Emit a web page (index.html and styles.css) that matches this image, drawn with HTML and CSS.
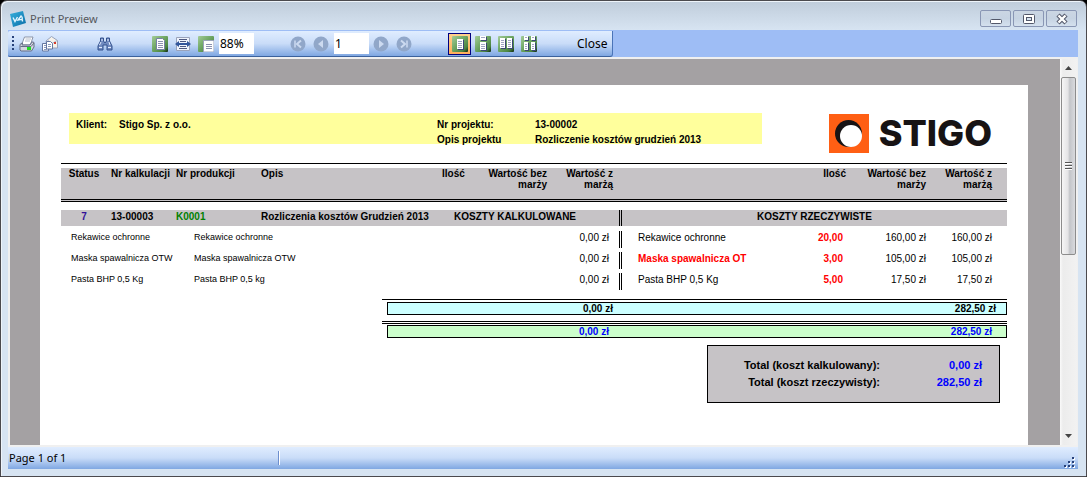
FILE: index.html
```html
<!DOCTYPE html>
<html lang="pl">
<head>
<meta charset="utf-8">
<title>Print Preview</title>
<link rel="stylesheet" href="styles.css">
</head>
<body>
<svg class="defs" aria-hidden="true">
  <defs>
    <linearGradient id="green" x1="0" y1="0" x2="1" y2="1"><stop offset="0" stop-color="#a3cb98"/><stop offset=".4" stop-color="#74ab69"/><stop offset=".8" stop-color="#4a8441"/><stop offset="1" stop-color="#0d260d"/></linearGradient>
    <linearGradient id="tile" x1="0" y1="0" x2="1" y2="1"><stop offset="0" stop-color="#36b0dd"/><stop offset="1" stop-color="#0a6ea8"/></linearGradient>
  </defs>
</svg>
<div class="window">
  <header class="titlebar">
    <svg class="app-icon" viewBox="0 0 16 16"><path d="M0 3 13 0 16 12 3 16Z" fill="url(#tile)"/><path d="M3 6.500l2 4 2.500-4.500M11.500 4.500l-3.500 4.500 5-1M12 5.500l.5 5" fill="none" stroke="#e4f5ff" stroke-width="1.400"/></svg>
    <h1 class="title">Print Preview</h1>
    <div class="window-buttons">
      <button class="window-button" aria-label="Minimize"><svg viewBox="0 0 14 12"><rect x="1.500" y="6.500" width="11" height="4" rx="1" fill="#fff" stroke="#53586a"/></svg></button>
      <button class="window-button" aria-label="Maximize"><svg viewBox="0 0 14 12"><rect x="1.500" y="1.500" width="11" height="9" rx="1" fill="#fff" stroke="#53586a"/><rect x="4.500" y="4.500" width="5" height="3" fill="#d7e4f2" stroke="#53586a"/></svg></button>
      <button class="window-button" aria-label="Close window"><svg viewBox="0 0 14 12"><path d="M3 2l8 8M11 2l-8 8" stroke="#53586a" stroke-width="4.500"/><path d="M3.500 2.500l7 7M10.500 2.500l-7 7" stroke="#fff" stroke-width="2.400"/></svg></button>
    </div>
  </header>

  <div class="toolbar-row">
    <div class="toolbar" role="toolbar">
      <span class="grip"></span>
      <div class="group">
        <button class="tool" aria-label="Print"><svg viewBox="0 0 16 16"><path d="M5.500 1H14l-2 6-1 2H2.500Z" fill="#fff" stroke="#8a94a8"/><path d="M6.500 3h5.500M6 5h5" stroke="#b5bdcb"/><path d="M1 8.500 3 7h.5L3 9h8l2-3h1.500l.5 1v4l-2.500 4H2l-1-1Z" fill="#d3d7e0" stroke="#656e86"/><path d="M1.500 10.500H12L15 7" fill="none" stroke="#656e86"/><rect x="8" y="11" width="4" height="3" fill="#20e020"/></svg></button>
        <button class="tool" aria-label="Mail"><svg viewBox="0 0 16 16"><path d="M4 5l5.500-4.500 6 4V12H5Z" fill="#f7f2ea" stroke="#98a4bd"/><path d="M6 4.500l4 3 5-3" fill="none" stroke="#a9b6cf"/><rect x="12" y="6" width="2" height="2" fill="#d63b2b"/><path d="M.5 7.500h6V15h-6Z" fill="#fff" stroke="#6477a0"/><path d="M4.500 5.500h4l2 2V13h-6Z" fill="#fff" stroke="#6477a0"/><path d="M6 8.500h3M6 10.500h3M2 9.500h2M2 11.500h2M2 13.500h3" stroke="#8b9bbd"/></svg></button>
      </div>
      <button class="tool" aria-label="Find"><svg viewBox="0 0 16 16"><path d="M3.500 2h3v3L8 7l1.500-2V2h3v3l2.500 5v4h-5V9H6v5H1v-4l2.500-5Z" fill="#718bc0" stroke="#33508c"/><path d="M4 4h2M10 4h2M2.500 9l1.500-3M12 6l1 3M2 11.500h3M11 11.500h3" stroke="#e4edff"/></svg></button>
      <div class="group">
        <button class="tool" aria-label="Whole page"><svg viewBox="0 0 16 16"><rect width="16" height="16" rx="1" fill="url(#green)"/><path d="M4.500 2.500h6l2 2v9h-8Z" fill="#fff" stroke="#7680a5"/><path d="M6 5.500h5M6 7.500h5M6 9.500h5M6 11.500h5" stroke="#8a90b0"/></svg></button>
        <button class="tool" aria-label="Page width"><svg viewBox="0 0 16 16"><path d="M1.500 1.500h13v13h-13Z" fill="#eef3fc" stroke="#9aa3bb"/><path d="M4 3.500h8M4 12.500h8M5 5.500h6M5 10.500h6" stroke="#4d5780"/><path d="M0 8l4-3v6ZM16 8l-4-3v6Z" fill="#31559b"/><path d="M3 8h10" stroke="#31559b" stroke-width="2"/></svg></button>
        <button class="tool" aria-label="Actual size"><svg viewBox="0 0 16 16"><rect width="16" height="16" rx="1" fill="url(#green)"/><path d="M5.500 4.500H16V16H5.500Z" fill="#fff" stroke="#9aa3bb"/><path d="M8 8.500h6M8 10.500h6M8 12.500h6" stroke="#8a90b0"/></svg></button>
      </div>
      <input class="field" type="text" value="88%" aria-label="Zoom">
      <div class="group nav">
        <button class="tool" aria-label="First page"><svg viewBox="0 0 16 16"><circle cx="8" cy="8" r="7.500" fill="#91a7c9"/><path d="M5 4.500v7" stroke="#ccdaf0" stroke-width="1.500"/><path d="M11 4.500 7 8l4 3.500" fill="none" stroke="#ccdaf0" stroke-width="2"/></svg></button>
        <button class="tool" aria-label="Previous page"><svg viewBox="0 0 16 16"><circle cx="8" cy="8" r="7.500" fill="#91a7c9"/><path d="M10 4 5 8l5 4Z" fill="#ccdaf0"/></svg></button>
      </div>
      <input class="field" type="text" value="1" aria-label="Page number">
      <div class="group nav">
        <button class="tool" aria-label="Next page"><svg viewBox="0 0 16 16"><circle cx="8" cy="8" r="7.500" fill="#91a7c9"/><path d="M6 4l5 4-5 4Z" fill="#ccdaf0"/></svg></button>
        <button class="tool" aria-label="Last page"><svg viewBox="0 0 16 16"><circle cx="8" cy="8" r="7.500" fill="#91a7c9"/><path d="M11 4.500v7" stroke="#ccdaf0" stroke-width="1.500"/><path d="M5 4.500 9 8l-4 3.500" fill="none" stroke="#ccdaf0" stroke-width="2"/></svg></button>
      </div>
      <div class="group views">
        <button class="tool active" aria-label="Single page"><svg viewBox="0 0 16 16"><rect width="16" height="16" rx="1" fill="url(#green)"/><path d="M6 4h6v10H6Z" fill="#3b4674"/><path d="M5 3h6v10H5Z" fill="#fff"/><path d="M6 5.500h4M6 7.500h4M6 9.500h4M6 11.500h4" stroke="#a0a6c2"/></svg></button>
        <button class="tool" aria-label="Continuous"><svg viewBox="0 0 16 16"><rect width="16" height="16" rx="1" fill="url(#green)"/><path d="M6 1h6v4H6ZM6 7h6v8H6Z" fill="#3b4674"/><path d="M5 0h6v4H5ZM5 6h6v8H5Z" fill="#fff"/><path d="M6 1.500h4M6 8.500h4M6 10.500h4M6 12.500h4" stroke="#a0a6c2"/></svg></button>
        <button class="tool" aria-label="Facing pages"><svg viewBox="0 0 16 16"><rect width="16" height="16" rx="1" fill="url(#green)"/><path d="M3 3h5v10H3ZM10 3h5v10h-5Z" fill="#3b4674"/><path d="M2 2h5v10H2ZM9 2h5v10H9Z" fill="#fff"/><path d="M3 4.500h3M3 6.500h3M3 8.500h3M3 10.500h3M10 4.500h3M10 6.500h3M10 8.500h3M10 10.500h3" stroke="#a0a6c2"/></svg></button>
        <button class="tool" aria-label="Continuous facing"><svg viewBox="0 0 16 16"><rect width="16" height="16" rx="1" fill="url(#green)"/><path d="M4 1h4v4H4ZM11 1h4v4h-4ZM4 7h4v8H4ZM11 7h4v8h-4Z" fill="#3b4674"/><path d="M3 0h4v4H3ZM10 0h4v4h-4ZM3 6h4v8H3ZM10 6h4v8h-4Z" fill="#fff"/><path d="M4 1.500h2M11 1.500h2M4 8.500h2M4 10.500h2M4 12.500h2M11 8.500h2M11 10.500h2M11 12.500h2" stroke="#a0a6c2"/></svg></button>
      </div>
      <button class="close">Close</button>
    </div>
  </div>

  <main class="viewer">
    <div class="canvas">
      <article class="paper">
        <div class="report-head">
          <dl class="project">
            <dt>Klient:</dt><dd>Stigo Sp. z o.o.</dd>
            <dt>Nr projektu:</dt><dd>13-00002</dd>
            <dt class="second">Opis projektu</dt><dd>Rozliczenie kosztów grudzień 2013</dd>
          </dl>
          <div class="logo">
            <svg class="logo-mark" viewBox="0 0 40 39"><rect width="40" height="39" fill="#ff5f14"/><circle cx="19.500" cy="19.500" r="13.500" fill="#171314"/><circle cx="22" cy="22" r="11" fill="#fff"/></svg>
            <span class="logo-name">STIGO</span>
          </div>
        </div>

        <table class="costs">
          <colgroup><col class="c46"><col class="c65"><col class="c85"><col class="c181"><col class="c29"><col class="c84"><col class="c68"><col class="c181"><col class="c50"><col class="c80"><col class="c77"></colgroup>
          <thead>
            <tr>
              <th class="center">Status</th><th>Nr kalkulacji</th><th>Nr produkcji</th><th>Opis</th>
              <th class="num">Ilość</th><th class="num">Wartość bez<br>marży</th><th class="num inset">Wartość z<br>marżą</th>
              <th></th><th class="num">Ilość</th><th class="num">Wartość bez<br>marży</th><th class="num edge">Wartość z<br>marżą</th>
            </tr>
          </thead>
          <tbody>
            <tr class="space"><td colspan="11"></td></tr>
            <tr class="job">
              <td class="center status">7</td><td>13-00003</td><td class="code">K0001</td><td>Rozliczenia kosztów Grudzień 2013</td>
              <td colspan="3" class="planned">KOSZTY KALKULOWANE</td><td colspan="4" class="divided center">KOSZTY RZECZYWISTE</td>
            </tr>
            <tr class="gap job-gap"><td colspan="11"></td></tr>
            <tr class="item">
              <td colspan="2" class="name">Rekawice ochronne</td><td colspan="3" class="detail">Rekawice ochronne</td><td colspan="2" class="num value">0,00 zł</td>
              <td class="divided">Rekawice ochronne</td><td class="num qty">20,00</td><td class="num">160,00 zł</td><td class="num edge">160,00 zł</td>
            </tr>
            <tr class="gap"><td colspan="11"></td></tr>
            <tr class="item">
              <td colspan="2" class="name">Maska spawalnicza OTW</td><td colspan="3" class="detail">Maska spawalnicza OTW</td><td colspan="2" class="num value">0,00 zł</td>
              <td class="divided alert">Maska spawalnicza OT</td><td class="num qty">3,00</td><td class="num">105,00 zł</td><td class="num edge">105,00 zł</td>
            </tr>
            <tr class="gap"><td colspan="11"></td></tr>
            <tr class="item">
              <td colspan="2" class="name">Pasta BHP 0,5 Kg</td><td colspan="3" class="detail">Pasta BHP 0,5 kg</td><td colspan="2" class="num value">0,00 zł</td>
              <td class="divided">Pasta BHP 0,5 Kg</td><td class="num qty">5,00</td><td class="num">17,50 zł</td><td class="num edge">17,50 zł</td>
            </tr>
          </tbody>
        </table>

        <section class="sums">
          <div class="sum">
            <div class="sum-box"><span>0,00 zł</span><span class="actual">282,50 zł</span></div>
          </div>
          <div class="sum grand">
            <div class="sum-box"><span>0,00 zł</span><span class="actual">282,50 zł</span></div>
          </div>
        </section>

        <dl class="totals">
          <dt>Total (koszt kalkulowany):</dt><dd>0,00 zł</dd>
          <dt>Total (koszt rzeczywisty):</dt><dd>282,50 zł</dd>
        </dl>
      </article>
    </div>
    <div class="scrollbar">
      <button class="arrow" aria-label="Scroll up"><svg viewBox="0 0 7 4"><path d="M0 4 3.500 0 7 4Z" fill="#444"/></svg></button>
      <div class="thumb"><svg viewBox="0 0 7 8"><path d="M0 .5h7M0 3.500h7M0 6.500h7" stroke="#555"/><path d="M0 1.500h7M0 4.500h7M0 7.500h7" stroke="#fff"/></svg></div>
      <button class="arrow last" aria-label="Scroll down"><svg viewBox="0 0 7 4"><path d="M0 0h7L3.500 4Z" fill="#444"/></svg></button>
    </div>
  </main>

  <footer class="statusbar">
    <span class="page-info">Page 1 of 1</span>
    <svg class="resize" viewBox="0 0 12 12"><path d="M9 1h2v2H9zM5 5h2v2H5zM9 5h2v2H9zM1 9h2v2H1zM5 9h2v2H5zM9 9h2v2H9z" fill="#fff"/><path d="M8 0h2v2H8zM4 4h2v2H4zM8 4h2v2H8zM0 8h2v2H0zM4 8h2v2H4zM8 8h2v2H8z" fill="#27417a"/></svg>
  </footer>
</div>
</body>
</html>
```
FILE: styles.css
```css
* { box-sizing: border-box; }

html, body { height: 100%; }

body {
  margin: 0;
  background: #000;
  color: #000;
  font-family: "Noto Sans", "Open Sans", sans-serif;
  font-size: 11px;
}

button, input { font: inherit; color: inherit; }
button { padding: 0; border: 0; background: none; }
dl, dd { margin: 0; }
svg { display: block; }
.defs { position: absolute; width: 0; height: 0; }

.window {
  display: flex;
  flex-direction: column;
  height: 100vh;
  padding: 0 8px 7px 7px;
  border: 1px solid #4b4a4e;
  border-radius: 7px 7px 0 0;
  background: linear-gradient(#bfccda, #d7e4f2 29px);
  box-shadow: inset 1px 1px 0 #eef4fa;
}

/* Title bar */
.titlebar {
  display: flex;
  align-items: center;
  height: 29px;
  padding: 6px 1px 0 2px;
}
.app-icon { width: 16px; height: 16px; }
.title {
  flex: 1;
  margin: 0 0 0 4px;
  color: #55585e;
  font-size: 11px;
  font-weight: 400;
}
.window-buttons { display: flex; gap: 2px; }
.window-button {
  display: grid;
  place-items: center;
  width: 31px;
  height: 17px;
  border: 1px solid #8996b4;
  border-radius: 2px;
  background: linear-gradient(#cbd6e3, #c6d3e2 50%, #d4e0ee);
}
.window-button svg { width: 14px; height: 12px; }

/* Toolbar */
.toolbar-row {
  height: 27px;
  padding-top: 1px;
  background: #9ebdf5;
}
.toolbar {
  display: flex;
  align-items: center;
  width: max-content;
  height: 26px;
  padding: 0 1px 0 4px;
  border-right: 1px solid #4a74b8;
  border-bottom: 1px solid #3b619c;
  border-radius: 2px 0 3px 2px;
  background: linear-gradient(#e0edff, #c9dcf8 50%, #7fa7e2);
}
.grip {
  width: 3px;
  height: 15px;
  background: repeating-linear-gradient(#27417a 0 2px, transparent 2px 4px) 0 0 / 2px 100% no-repeat;
}
.group { display: flex; }
.tool {
  display: grid;
  place-items: center;
  width: 23px;
  height: 22px;
}
.tool svg { width: 16px; height: 16px; }
.tool.active { border: 1px solid #000080; background: linear-gradient(#ffd08c, #ffae5a); }
.toolbar > .tool { margin: 0 32px; }
.field {
  width: 35px;
  height: 21px;
  margin: 0 0 0 2px;
  padding: 0 1px;
  border: 0;
  border-radius: 0;
  background: #fff;
  font-size: 12px;
}
.field:first-of-type + .nav { margin-left: 32px; }
.views { margin-left: 33px; }
.close {
  height: 22px;
  margin-left: 32px;
  padding: 0 4px 0 5px;
  font-size: 12px;
}

/* Preview area */
.viewer {
  display: flex;
  flex: 1;
  min-height: 0;
  padding: 2px 1px 2px 2px;
  background: #f0f0f0;
}
.canvas {
  flex: 1;
  min-width: 0;
  padding: 26px 32px 0 30px;
  background: #a4a1a3;
}
.paper {
  height: 100%;
  padding: 28px 21px 0;
  overflow: hidden;
  background: #fff;
  font: 10px/12px "Liberation Sans", Arial, sans-serif;
}

.scrollbar {
  display: flex;
  flex-direction: column;
  width: 17px;
  padding: 0 1px;
  background: linear-gradient(90deg, #fafafa, #ececec 3px, #f2f2f2);
}
.arrow { display: grid; place-items: center; height: 18px; }
.arrow svg { width: 7px; height: 4px; }
.arrow.last { margin-top: auto; }
.thumb {
  display: grid;
  place-items: center;
  height: 48%;
  max-height: 178px;
  border: 1px solid #8c8c8c;
  border-radius: 2px;
  background: linear-gradient(90deg, #f6f6f6, #e4e4e6 45%, #c3c5c9 60%, #d9dadd);
}
.thumb svg { width: 7px; height: 8px; }

/* Report heading */
.report-head {
  display: flex;
  align-items: flex-start;
  height: 50px;
  padding: 0 15px 0 8px;
}
.project {
  display: grid;
  flex: 1;
  grid-template-columns: 43fr 318fr 98fr 227fr;
  row-gap: 3px;
  height: 31px;
  margin-right: 67px;
  padding: 6px 0 0 7px;
  background: #ffff9c;
  font-weight: 700;
}
.project .second { grid-column: 3; }
.logo {
  display: flex;
  align-items: center;
  justify-content: space-between;
  width: 163px;
  padding-top: 1px;
}
.logo-mark { width: 40px; height: 39px; }
.logo-name {
  color: #171314;
  font: 800 36px/39px Inter, Roboto, sans-serif;
}

/* Cost table */
.costs {
  width: 100%;
  padding-top: 4px;
  border-top: 1px solid #000;
  border-collapse: separate;
  border-spacing: 0;
  table-layout: fixed;
}
.c29 { width: 29px; }
.c46 { width: 46px; }
.c50 { width: 50px; }
.c65 { width: 65px; }
.c68 { width: 68px; }
.c77 { width: 77px; }
.c80 { width: 80px; }
.c84 { width: 84px; }
.c85 { width: 85px; }
.c181 { width: 181px; }
.costs th, .costs td {
  padding: 0 4px;
  text-align: left;
  vertical-align: top;
  white-space: nowrap;
}
.costs th {
  height: 34px;
  border-bottom: 3px double #000;
  background: #c6c3c6;
  line-height: 11px;
}
.costs .center { text-align: center; }
.costs .num { text-align: right; }
.costs .inset { padding-right: 6px; }
.costs .edge { padding-right: 15px; }
.costs .value { padding-right: 10px; }
.costs .qty { padding-right: 7px; color: #f00; font-weight: 700; }
.space td { height: 8px; }
.gap td { height: 4px; }
.job-gap td { height: 5px; }
.job td {
  height: 16px;
  background: #c6c3c6;
  font-weight: 700;
  line-height: 14px;
}
.job .status { color: #319; }
.job .code { color: #008000; }
.job .planned { padding-left: 16px; }
.costs .divided { border-left: 3px double #000; }
.item td { height: 17px; line-height: 13px; }
.item .divided { padding-left: 16px; }
.item .name { padding-left: 10px; font-size: 9px; }
.item .detail { padding-left: 22px; font-size: 9px; }
.item .alert { color: #f00; font-weight: 700; }

/* Sums */
.sums {
  display: grid;
  grid-template-columns: 321fr 625fr;
  row-gap: 6px;
  margin-top: 9px;
}
.sum {
  grid-column: 2;
  padding: 2px 0 0 5px;
  border-top: 1px solid #000;
}
.sum-box {
  display: grid;
  grid-template-columns: 229fr 389fr;
  height: 13px;
  border: 1px solid #000;
  background: #cff;
  font-weight: 700;
  line-height: 11px;
  text-align: right;
}
.sum-box span { padding-right: 4px; }
.sum-box .actual { padding-right: 10px; }
.grand { padding-top: 1px; border-top: 3px double #000; }
.grand .sum-box { background: #cfc; color: #00f; }
.grand span { padding-right: 8px; }
.grand .actual { padding-right: 14px; }

.totals {
  display: grid;
  grid-template-columns: 1fr 102px;
  width: 31%;
  margin: 7px 7px 0 auto;
  padding: 11px 17px 11px 0;
  border: 1px solid #000;
  background: #c6c3c6;
  font-size: 11px;
  font-weight: 700;
  line-height: 17px;
  text-align: right;
}
.totals dd { color: #00f; }

/* Status bar */
.statusbar {
  display: flex;
  align-items: center;
  justify-content: space-between;
  height: 22px;
  padding: 0 2px 0 1px;
  background: linear-gradient(#e0edff, #c9dcf8 50%, #7fa7e2);
}
.page-info {
  width: 270px;
  border-right: 1px solid #6d8fce;
  box-shadow: 1px 0 #fff;
  font-size: 11px;
  line-height: 14px;
}
.resize { width: 12px; height: 12px; align-self: flex-end; }
```
